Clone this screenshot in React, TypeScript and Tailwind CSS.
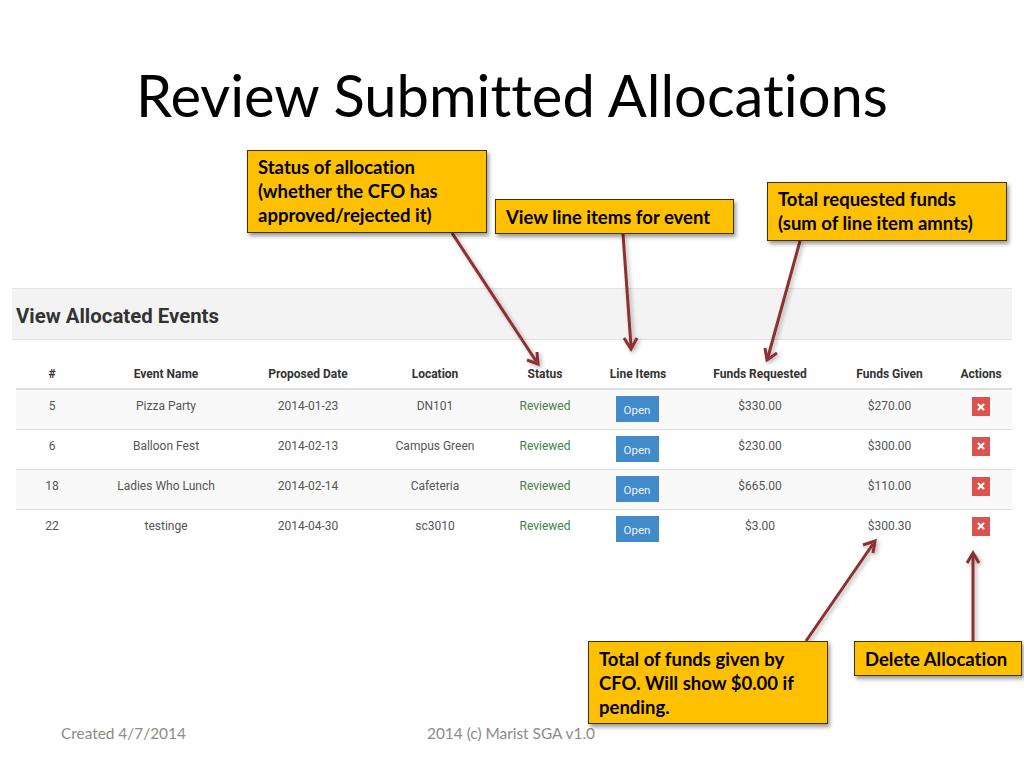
import { X } from "lucide-react";

const events = [
  { id: 5, name: "Pizza Party", date: "2014-01-23", location: "DN101", requested: "$330.00", given: "$270.00" },
  { id: 6, name: "Balloon Fest", date: "2014-02-13", location: "Campus Green", requested: "$230.00", given: "$300.00" },
  { id: 18, name: "Ladies Who Lunch", date: "2014-02-14", location: "Cafeteria", requested: "$665.00", given: "$110.00" },
  { id: 22, name: "testinge", date: "2014-04-30", location: "sc3010", requested: "$3.00", given: "$300.30" },
];

const headers = ["#", "Event Name", "Proposed Date", "Location", "Status", "Line Items", "Funds Requested", "Funds Given"];

const arrows = [
  { line: "452,233 536,361", head: "527,360 538,364 537,352" },
  { line: "623,234 631,346", head: "624,338 631,349 637,338" },
  { line: "800,241 768,357", head: "765,348 767,360 777,353" },
  { line: "806,641 873,544", head: "863,545 875,541 873,553" },
  { line: "973,641 973,556", head: "967,563 973,553 979,563" },
];

const Callout = ({ className, children }: { className: string; children: React.ReactNode }) => (
  <div
    className={`absolute bg-[#ffc000] border border-[#3d3300] shadow-[2px_3px_4px_rgba(0,0,0,0.4)] pl-[10px] font-[Lato,sans-serif] [font-variant-ligatures:none] font-bold text-[18.5px] leading-[24px] text-black ${className}`}
  >
    {children}
  </div>
);

export default function App() {
  return (
    <div className="relative w-[1024px] h-[768px] overflow-hidden bg-white">
      <h1 className="pt-[61px] pl-[136px] h-[288px] font-[Lato,sans-serif] [font-variant-ligatures:none] text-[57.9px] leading-[68px] text-black">
        Review Submitted Allocations
      </h1>

      <div className="ml-3 w-[1000px] h-[52px] flex items-center pt-[5px] pl-1 bg-[#f3f3f3] border-y border-[#e1e1e1]">
        <h2 className="font-[Roboto,sans-serif] font-bold text-[20.4px] text-[#333333]">View Allocated Events</h2>
      </div>

      <table className="ml-4 mt-[20px] w-[996px] table-fixed border-collapse font-[Roboto,sans-serif] text-[12px] text-[#555555]">
        <colgroup>
          <col className="w-[72px]" />
          <col className="w-[156px]" />
          <col className="w-[128px]" />
          <col className="w-[126px]" />
          <col className="w-[94px]" />
          <col className="w-[92px]" />
          <col className="w-[152px]" />
          <col className="w-[107px]" />
          <col className="w-[69px]" />
        </colgroup>
        <thead>
          <tr className="h-[29px] border-b-2 border-[#dddddd] text-[#333333]">
            {headers.map((h) => (
              <th key={h} className="font-bold text-center align-top pt-[5px]">
                {h}
              </th>
            ))}
            <th className="font-bold text-center align-top pt-[5px] pl-[7px]">Actions</th>
          </tr>
        </thead>
        <tbody>
          {events.map((e, i) => (
            <tr
              key={e.id}
              className={`h-[40px] ${i < 3 ? "border-b border-[#dddddd]" : ""} ${i % 2 == 0 ? "bg-[#f9f9f9]" : "bg-white"}`}
            >
              <td className="text-center align-top pt-[7px]">{e.id}</td>
              <td className="text-center align-top pt-[7px]">{e.name}</td>
              <td className="text-center align-top pt-[7px]">{e.date}</td>
              <td className="text-center align-top pt-[7px]">{e.location}</td>
              <td className="text-center align-top pt-[7px] text-[#44804a]">Reviewed</td>
              <td className="text-center align-top pt-[6px]">
                <button className="w-[43px] h-[26px] mr-[2px] pt-[4px] bg-[#428bca] border border-[#428bca] text-[11.5px] text-[#e8f1f9]">
                  Open
                </button>
              </td>
              <td className="text-center align-top pt-[7px]">{e.requested}</td>
              <td className="text-center align-top pt-[7px]">{e.given}</td>
              <td className="align-top pt-[7px] pl-[7px]">
                <button className="mx-auto flex items-center justify-center w-[18px] h-[19px] bg-[#d9534f]">
                  <X size={10} strokeWidth={5} className="text-white" />
                </button>
              </td>
            </tr>
          ))}
        </tbody>
      </table>

      <div className="mt-[173px] flex font-[Lato,sans-serif] [font-variant-ligatures:none] text-[15.4px] text-[#8b8b8b]">
        <span className="ml-[61px] w-[366px]">Created 4/7/2014</span>
        <span>2014 (c) Marist SGA v1.0</span>
      </div>

      <svg className="absolute inset-0 drop-shadow-[2px_2px_2px_rgba(0,0,0,0.3)]" width="1024" height="768" fill="none">
        {arrows.map((a) => (
          <g key={a.line} stroke="#8e3030" strokeWidth="3">
            <polyline points={a.line} />
            <polyline points={a.head} />
          </g>
        ))}
      </svg>

      <Callout className="left-[247px] top-[150px] w-[240px] h-[83px] pt-[4px]">
        Status of allocation
        <br />
        (whether the CFO has
        <br />
        approved/rejected it)
      </Callout>
      <Callout className="left-[495px] top-[199px] w-[239px] h-[35px] pt-[5px]">View line items for event</Callout>
      <Callout className="left-[767px] top-[182px] w-[240px] h-[59px] pt-[4px]">
        Total requested funds
        <br />
        (sum of line item amnts)
      </Callout>
      <Callout className="left-[588px] top-[641px] w-[240px] h-[83px] pt-[5px]">
        Total of funds given by
        <br />
        CFO. Will show $0.00 if
        <br />
        pending.
      </Callout>
      <Callout className="left-[854px] top-[641px] w-[168px] h-[35px] pt-[5px]">Delete Allocation</Callout>
    </div>
  );
}
